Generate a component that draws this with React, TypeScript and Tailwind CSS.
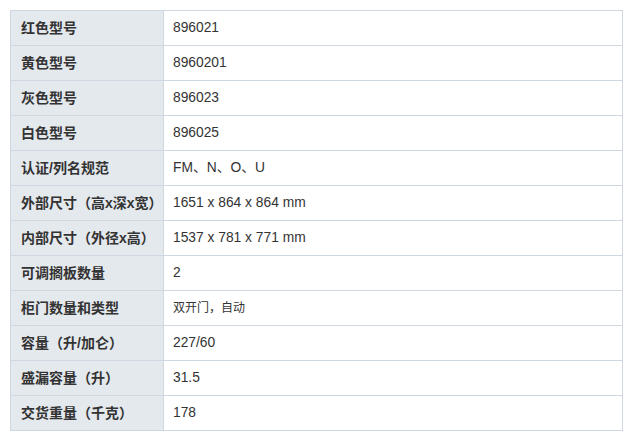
const rows: [string, string, boolean?][] = [
  ['红色型号', '896021'],
  ['黄色型号', '8960201'],
  ['灰色型号', '896023'],
  ['白色型号', '896025'],
  ['认证/列名规范', 'FM、N、O、U'],
  ['外部尺寸（高x深x宽）', '1651 x 864 x 864 mm'],
  ['内部尺寸（外径x高）', '1537 x 781 x 771 mm'],
  ['可调搁板数量', '2'],
  ['柜门数量和类型', '双开门，自动', true],
  ['容量（升/加仑）', '227/60'],
  ['盛漏容量（升）', '31.5'],
  ['交货重量（千克）', '178'],
]

export default function App() {
  return (
    <div className="min-h-screen bg-white p-[10px] pr-[12px] font-['Liberation_Sans','Noto_Sans_CJK_SC',sans-serif] text-[14px] text-[#333]">
      <table className="w-[613px] border-collapse">
        <tbody>
          {rows.map(([label, value, small]) => (
            <tr key={label} className="h-[35px]">
              <td className="w-[153px] border border-[#cfd8e2] bg-[#e4e9ee] pl-[10px] font-bold">{label}</td>
              <td className={`border border-[#cfd8e2] pl-[9px] ${small ? 'text-[12px]' : 'text-[13.8px]'}`}>{value}</td>
            </tr>
          ))}
        </tbody>
      </table>
    </div>
  )
}
